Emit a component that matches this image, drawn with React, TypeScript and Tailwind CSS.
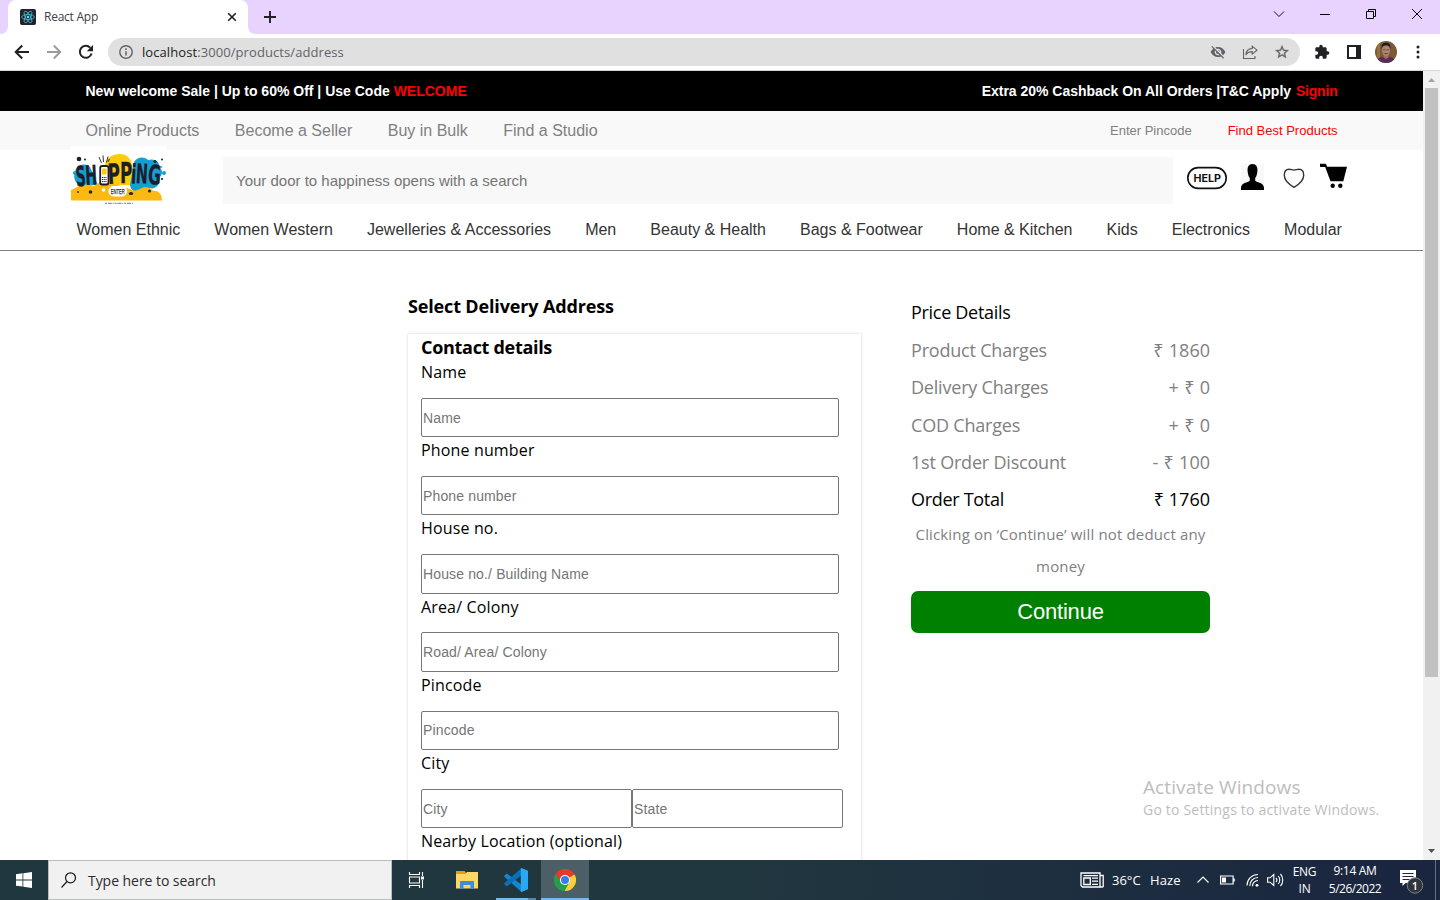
import React from "react";

const ui = "font-['Open_Sans','Noto_Sans',sans-serif]";
const arial = "font-['Liberation_Sans',Arial,sans-serif]";

function ReactIcon() {
  return (
    <svg className="h-4 w-4" viewBox="0 0 16 16">
      <rect width="16" height="16" rx="2" fill="#20232a" />
      <g fill="none" stroke="#53b9d6" strokeWidth="0.8">
        <ellipse cx="8" cy="8" rx="6.4" ry="2.5" />
        <ellipse cx="8" cy="8" rx="6.4" ry="2.5" transform="rotate(60 8 8)" />
        <ellipse cx="8" cy="8" rx="6.4" ry="2.5" transform="rotate(120 8 8)" />
      </g>
      <circle cx="8" cy="8" r="1.3" fill="#61dafb" />
    </svg>
  );
}

function TitleBar() {
  return (
    <div className="flex h-[34px] items-stretch bg-[#e8d3ff]">
      <svg className="h-[34px] w-2" viewBox="0 0 8 34"><path d="M8 26v8H0c5 0 8-3 8-8z" fill="#fff" /></svg>
      <div className="flex w-[240px] items-center rounded-t-lg bg-white pl-3 pr-[10px]">
        <ReactIcon />
        <span className="ml-2 flex-1 text-[12px] tracking-[-0.25px] text-[#3c4043]">React App</span>
        <svg className="h-3 w-3" viewBox="0 0 12 12"><path d="M2.2 2.2l7.6 7.6M9.8 2.2L2.2 9.8" stroke="#202124" strokeWidth="1.6" /></svg>
      </div>
      <svg className="h-[34px] w-2" viewBox="0 0 8 34"><path d="M0 26v8h8c-5 0-8-3-8-8z" fill="#fff" /></svg>
      <svg className="ml-2 mt-[11px] h-3 w-3" viewBox="0 0 12 12"><path d="M6 0v12M0 6h12" stroke="#202124" strokeWidth="1.9" /></svg>
      <div className="ml-auto flex pr-[17px] pt-[8px]">
        <svg className="h-3 w-[12px]" viewBox="0 0 12 12"><path d="M1 3.5L6 8.5l5-5" fill="none" stroke="#111" strokeWidth="1" /></svg>
        <svg className="ml-[34px] h-3 w-[12px]" viewBox="0 0 12 12"><path d="M1 6.500h10" stroke="#000" strokeWidth="1" /></svg>
        <svg className="ml-[34px] h-3 w-[12px]" viewBox="0 0 12 12"><path d="M1.500 3.500h7v7h-7zM3.500 3.500v-2h7v7h-2" fill="none" stroke="#000" strokeWidth="1" /></svg>
        <svg className="ml-[34px] h-3 w-[12px]" viewBox="0 0 12 12"><path d="M1 1l10 10M11 1L1 11" stroke="#000" strokeWidth="1" /></svg>
      </div>
    </div>
  );
}

function Toolbar() {
  return (
    <div className="flex h-[37px] items-center border-b border-[#d5d7d8] bg-white pl-[14px]">
      <svg className="h-4 w-4" viewBox="0 0 16 16"><path d="M15 8H2M8.200 1.500L1.700 8l6.500 6.500" fill="none" stroke="#202124" strokeWidth="2" /></svg>
      <svg className="ml-4 h-4 w-4" viewBox="0 0 16 16"><path d="M1 8h13M7.800 1.500L14.300 8l-6.500 6.500" fill="none" stroke="#9a9b9d" strokeWidth="1.900" /></svg>
      <svg className="ml-4 h-4 w-4" viewBox="0 0 16 16">
        <path d="M13.600 9.500A6 6 0 1 1 12.300 3.800" fill="none" stroke="#202124" strokeWidth="2" />
        <path d="M15 1v6.200H8.800z" fill="#202124" />
      </svg>
      <div className="ml-[14px] flex h-7 w-[1192px] items-center rounded-full bg-[#e0e0e1] pl-[11px] pr-[10px]">
        <svg className="h-[14px] w-[14px]" viewBox="0 0 14 14">
          <circle cx="7" cy="7" r="6.200" fill="none" stroke="#5f6368" strokeWidth="1.400" />
          <path d="M7 6.200v4.300M7 3.300v1.600" stroke="#5f6368" strokeWidth="1.500" />
        </svg>
        <span className="ml-[9px] flex-1 pt-[2px] text-[13px] tracking-[0.08px] text-[#5f6368]"><span className="text-[#202124]">localhost</span>:3000/products/address</span>
        <svg className="h-4 w-4" viewBox="0 0 24 24" fill="#5f6368"><path d="M12 7c2.760 0 5 2.240 5 5 0 .65-.13 1.260-.36 1.830l2.920 2.920c1.510-1.260 2.700-2.890 3.430-4.750-1.730-4.390-6-7.500-11-7.500-1.400 0-2.740.25-3.980.7l2.160 2.160C10.740 7.130 11.350 7 12 7zM2 4.270l2.280 2.280.46.46C3.080 8.300 1.780 10.020 1 12c1.730 4.390 6 7.500 11 7.500 1.550 0 3.030-.3 4.380-.84l.42.42L19.730 22 21 20.730 3.270 3 2 4.270zM7.530 9.800l1.550 1.550c-.05.21-.08.43-.08.65 0 1.660 1.340 3 3 3 .22 0 .44-.03.65-.08l1.550 1.550c-.67.33-1.410.53-2.200.53-2.760 0-5-2.240-5-5 0-.79.2-1.530.53-2.200zm4.310-.78l3.150 3.150.02-.16c0-1.660-1.340-3-3-3l-.17.01z" /></svg>
        <svg className="ml-4 h-4 w-4" viewBox="0 0 16 16" fill="none" stroke="#5f6368" strokeWidth="1.100"><path d="M1.500 5v9.500H13V12M10.200 2.200L15 6.200l-4.800 4V7.600C7 7.600 5 8.800 3.800 11c.3-4 2.500-6.200 6.400-6.600z" /></svg>
        <svg className="ml-4 h-4 w-4" viewBox="0 0 24 24" fill="#5f6368" stroke="#5f6368" strokeWidth="0.500"><path d="M22 9.240l-7.190-.62L12 2 9.190 8.630 2 9.240l5.460 4.730L5.820 21 12 17.270 18.180 21l-1.630-7.030L22 9.240zM12 15.400l-3.760 2.270 1-4.280-3.320-2.880 4.380-.38L12 6.100l1.710 4.040 4.380.38-3.320 2.880 1 4.280L12 15.400z" /></svg>
      </div>
      <svg className="ml-[14px] h-4 w-4" viewBox="0 0 24 24" fill="#202124"><path d="M20.500 11H19V7c0-1.100-.9-2-2-2h-4V3.500C13 2.120 11.880 1 10.500 1S8 2.120 8 3.500V5H4c-1.100 0-1.990.9-1.990 2v3.800H3.500c1.490 0 2.700 1.210 2.700 2.700s-1.210 2.700-2.700 2.700H2V20c0 1.100.9 2 2 2h3.800v-1.500c0-1.490 1.210-2.700 2.700-2.700 1.490 0 2.700 1.210 2.700 2.700V22H17c1.100 0 2-.9 2-2v-4h1.500c1.380 0 2.500-1.120 2.500-2.500S21.880 11 20.500 11z" /></svg>
      <svg className="ml-[17px] h-[14px] w-[14px]" viewBox="0 0 14 14"><path d="M0 0h14v14H0zM2 2v10h7V2z" fill="#202124" fillRule="evenodd" /></svg>
      <svg className="ml-[14px] h-[22px] w-[22px]" viewBox="0 0 22 22">
        <defs><clipPath id="avatar"><circle cx="11" cy="11" r="11" /></clipPath></defs>
        <g clipPath="url(#avatar)">
          <rect width="22" height="22" fill="#7b5a36" />
          <rect x="2" width="3" height="22" fill="#94713f" />
          <path d="M1 22c1-5 4-6.500 10-6.500S20 17 21 22z" fill="#5b2c59" />
          <path d="M8.500 12h5v4.500L11 18l-2.500-1.500z" fill="#a07058" />
          <ellipse cx="11" cy="9.300" rx="4" ry="5.600" fill="#b08270" />
          <path d="M6.600 8.500C5.800 3.500 8 1.800 11 1.800s5.200 1.700 4.400 6.700c-.5-3-1.300-4-4.400-4s-3.900 1-4.400 4z" fill="#211a1c" />
          <path d="M8.300 8.800h2M11.700 8.800h2M9.300 12.500h3.400" stroke="#50342c" strokeWidth="0.800" />
        </g>
      </svg>
      <svg className="ml-[19px] h-4 w-[4px]" viewBox="0 0 4 16" fill="#202124"><circle cx="2" cy="3" r="1.500" /><circle cx="2" cy="8" r="1.500" /><circle cx="2" cy="13" r="1.500" /></svg>
    </div>
  );
}

function Logo() {
  return (
    <svg className="h-[58px] w-[95px]" viewBox="0 0 95 58">
      <rect width="95" height="58" fill="#fff" />
      <path d="M34 22c-1-10 8-14 15-14 6 0 9 3 11 7l6 24H34z" fill="#fecb0d" />
      <path d="M63 16c5-7 12-4 14-2 6-2 12 1 11 7 4 3 4 7 1 10 1 7-5 13-10 11-5 8-19 6-20-3z" fill="#159fd3" />
      <path d="M5 23c4-6 11-5 14-2l8 18-17 0c-6 0-9-9-5-16z" fill="#159fd3" />
      <circle cx="4" cy="27" r="2" fill="#159fd3" />
      <circle cx="93" cy="27" r="2" fill="#159fd3" />
      <circle cx="90" cy="21" r="1" fill="#159fd3" />
      <path d="M0 54.500V44c5-2 8-5 13-5 5-1 7 0 10 1 5-4 10-6 17-3l19 6c4 3 7 1 10 0 4-3 11-2 13 2 5-1 9 3 9 9.500z" fill="#fdb912" />
      <circle cx="8" cy="13" r="2.300" fill="#20202b" /><circle cx="14" cy="13.500" r="1" fill="#20202b" />
      <circle cx="19.500" cy="46" r="1.800" fill="#20202b" /><circle cx="7" cy="46" r="0.900" fill="#20202b" />
      <ellipse cx="60" cy="47.500" rx="2.200" ry="1.500" fill="#20202b" /><circle cx="78.500" cy="45" r="1.500" fill="#20202b" />
      <circle cx="32.500" cy="44" r="1.800" fill="#fff" />
      <circle cx="84" cy="15.500" r="1.600" fill="#20202b" /><circle cx="91" cy="13.500" r="1" fill="#20202b" />
      <circle cx="91" cy="33" r="1.100" fill="#20202b" />
      <g fill="#1d1e2b" stroke="#1d1e2b" strokeWidth="0.300" strokeLinejoin="round" fontFamily="'DejaVu Sans',sans-serif" fontWeight="700">
        <text transform="translate(5.500 40.500) rotate(-4) scale(.49 1)" fontSize="28">S</text>
        <text transform="translate(14.800 39) rotate(-3) scale(.52 1)" fontSize="27">H</text>
        <text transform="translate(37.300 38) rotate(-3) scale(.6 1)" fontSize="28">P</text>
        <text transform="translate(49 36.500) scale(.6 1)" fontSize="28">P</text>
        <text transform="translate(59.800 37.500) rotate(3) scale(.56 1)" fontSize="27">i</text>
        <text transform="translate(64.500 37) rotate(3) scale(.53 1)" fontSize="27">N</text>
        <text transform="translate(76.500 38) rotate(4) scale(.58 1)" fontSize="27">G</text>
      </g>
      <rect x="29.200" y="20" width="8.300" height="18.500" rx="2" fill="#fff" stroke="#1d1e2b" strokeWidth="1.800" />
      <rect x="31" y="22.500" width="4.600" height="6" fill="#fecb0d" />
      <path d="M31 31.500h4.600M31 33.500h4.600M31 35.500h4.600" stroke="#1d1e2b" strokeWidth="1.100" strokeDasharray="1.100 .6" />
      <path d="M28 11l2.500 6M32 9.500l.5 6.500M37 10.500l-1.500 6M38.500 13l-1.500 3" stroke="#1d1e2b" strokeWidth="0.900" />
      <rect x="37.500" y="40" width="18.500" height="10.500" rx="5" fill="#fff" />
      <text x="39.700" y="48.300" fontSize="8" textLength="14" lengthAdjust="spacingAndGlyphs" fontFamily="'Liberation Sans',sans-serif" fill="#1d1e2b" stroke="#1d1e2b" strokeWidth="0.250">ENTER</text>
      <path d="M34 57.300h28" stroke="#777" strokeWidth="1" strokeDasharray="2 .8 4 .8 1 1" />
    </svg>
  );
}

function SiteHeader() {
  const cats = ["Women Ethnic", "Women Western", "Jewelleries & Accessories", "Men", "Beauty & Health", "Bags & Footwear", "Home & Kitchen", "Kids", "Electronics", "Modular"];
  return (
    <header className={`${arial} shrink-0`}>
      <div className="flex h-[40px] items-center justify-between bg-black pl-[85.500px] pr-[85.500px] text-[14px] font-bold text-white">
        <span>New welcome Sale | Up to 60% Off | Use Code <span className="text-[#f00]">WELCOME</span></span>
        <span className="tracking-[-0.02px]">Extra 20% Cashback On All Orders |T&amp;C Apply <span className="ml-px tracking-[-0.200px] text-[#f00]">Signin</span></span>
      </div>
      <div className="flex h-[39px] items-center bg-[#f9f9f9] pl-[85.500px] pr-[85.500px] text-[16px] text-[#808080]">
        <nav className="flex flex-1 gap-[35.500px]">
          <span>Online Products</span><span>Become a Seller</span><span>Buy in Bulk</span><span>Find a Studio</span>
        </nav>
        <span className="text-[13px]">Enter Pincode</span>
        <span className="ml-9 text-[13px] text-[#f00]">Find Best Products</span>
      </div>
      <div className="flex h-[58px] items-start pl-[71px]">
        <div className="-mt-1"><Logo /></div>
        <div className="ml-[57px] mt-[7px] flex h-[47px] w-[950px] items-center bg-[#f8f8f8] pl-[13px] pt-[2px] text-[15px] text-[#757575]">Your door to happiness opens with a search</div>
        <svg className="ml-[14px] mt-[16px] h-[24px] w-[40px]" viewBox="0 0 40 24">
          <rect x="0.800" y="1.600" width="38.400" height="20.800" rx="10.400" fill="none" stroke="#111" strokeWidth="1.600" />
          <text x="6.500" y="16" textLength="27.500" lengthAdjust="spacingAndGlyphs" fontSize="10.500" fontWeight="700" fontFamily="Inter,'Liberation Sans',sans-serif" fill="#111">HELP</text>
        </svg>
        <svg className="ml-[14px] mt-[14px] h-[26px] w-[23px]" viewBox="0 0 23 26">
          <rect width="23" height="26" fill="#f8f8f8" />
          <path d="M11.500 0C7.700 0 6.300 3 6.600 7c.3 3 .8 5.500 2.200 7v2.800C6.500 18.800.3 18.300 0 24v2h23v-2c-.3-5.700-6.500-5.200-8.800-7.200V14c1.400-1.500 1.900-4 2.200-7 .3-4-1.100-7-4.900-7z" fill="#000" />
        </svg>
        <svg className="ml-[19px] mt-[17px] h-[22px] w-[22px]" viewBox="0 0 22 22"><path d="M11 20.300C5.500 17 1.300 13 1.300 8.200 1.300 4.300 3.200 2.200 6 2.200c1.500 0 3.500.9 5 .9s3.500-.9 5-.9c2.800 0 4.700 2.100 4.700 6 0 4.800-4.200 8.800-9.700 12.100z" fill="none" stroke="#333" strokeWidth="1.400" /></svg>
        <svg className="ml-[15px] mt-[13px] h-[26px] w-[27px]" viewBox="0 0 27 26">
          <path d="M0 .7h4.500c1.300 0 1.800.6 2.200 1.800L7 3.700h20l-3.300 13H23.500v1.500H10.500L5.200 4H1C0 4 0 3.500 0 3z" fill="#000" />
          <circle cx="12.700" cy="22.700" r="2.200" /><circle cx="20.300" cy="22.700" r="2.200" />
        </svg>
      </div>
      <nav className="flex h-[43px] items-center justify-between border-b border-[#808080] pl-[76.500px] pr-[81px] pt-[2px] text-[16px] text-[#333]">
        {cats.map((c) => <span key={c}>{c}</span>)}
      </nav>
    </header>
  );
}

const inputCls = `${arial} block h-[39.400px] rounded-[2px] border border-[#767676] bg-white px-px pt-[0.200px] text-[14px] tracking-[0.14px] outline-none placeholder:text-[#757575]`;
const labelCls = "mb-[14.200px] block h-[24.600px] text-[16px] leading-[27px] tracking-[0.15px]";

function Field({ label, placeholder }: { label: string; placeholder: string }) {
  return (
    <div className="h-[78.200px]">
      <label className={labelCls}>{label}</label>
      <input className={`${inputCls} w-[418px]`} placeholder={placeholder} />
    </div>
  );
}

function AddressForm() {
  return (
    <section className="w-[453px]">
      <h2 className="h-[37px] text-[18px] leading-[22px] font-bold tracking-[-0.15px]">Select Delivery Address</h2>
      <div className="mt-[2px] h-[620px] pl-[13px] shadow-[0_0_3px_rgba(0,0,0,0.18)]">
        <h3 className="h-[25px] text-[18px] leading-[26px] font-bold tracking-[-0.3px]">Contact details</h3>
        <Field label="Name" placeholder="Name" />
        <Field label="Phone number" placeholder="Phone number" />
        <Field label="House no." placeholder="House no./ Building Name" />
        <Field label="Area/ Colony" placeholder="Road/ Area/ Colony" />
        <Field label="Pincode" placeholder="Pincode" />
        <div className="h-[78.200px]">
          <label className={labelCls}>City</label>
          <div className="flex">
            <input className={`${inputCls} w-[211px]`} placeholder="City" />
            <input className={`${inputCls} w-[211px]`} placeholder="State" />
          </div>
        </div>
        <Field label="Nearby Location (optional)" placeholder="Nearby Location" />
      </div>
    </section>
  );
}

function PriceRow({ label, value, dark }: { label: string; value?: string; dark?: boolean }) {
  return (
    <div className={`flex h-[37.400px] items-center justify-between ${dark ? "text-black" : "text-[#808080]"}`}>
      <span className={dark ? "tracking-[-0.3px]" : "tracking-[-0.2px]"}>{label}</span>
      <span className={dark ? "" : "[word-spacing:0.6px]"}>{value}</span>
    </div>
  );
}

function PriceDetails() {
  return (
    <section className="ml-[50px] w-[299px] text-[18px]">
      <PriceRow label="Price Details" dark />
      <PriceRow label="Product Charges" value="₹ 1860" />
      <PriceRow label="Delivery Charges" value="+ ₹ 0" />
      <PriceRow label="COD Charges" value="+ ₹ 0" />
      <PriceRow label="1st Order Discount" value="- ₹ 100" />
      <PriceRow label="Order Total" value="₹ 1760" dark />
      <p className="-mt-[0.300px] h-[73.100px] text-center text-[15px] leading-[32px] tracking-[0.15px] text-[#808080]">Clicking on ‘Continue’ will not deduct any<br />money</p>
      <button className={`${arial} block h-[42px] w-full rounded-[7px] bg-[#008000] pb-[2px] text-[22px] tracking-[-0.2px] text-white`}>Continue</button>
    </section>
  );
}

function Scrollbar() {
  return (
    <div className="flex w-[17px] flex-col items-center bg-[#f1f1f1]">
      <svg className="h-[17px] w-[17px]" viewBox="0 0 17 17"><path d="M5 11l3.500-4 3.500 4z" fill="#a3a3a3" /></svg>
      <div className="h-[589px] w-[13px] bg-[#c1c1c1]" />
      <svg className="mt-auto h-[17px] w-[17px]" viewBox="0 0 17 17"><path d="M5 6l3.500 4L12 6z" fill="#505050" /></svg>
    </div>
  );
}

function Taskbar() {
  return (
    <div className="flex h-[40px] items-stretch bg-linear-to-r from-[#21373f] via-[#21373f] via-50% to-[#1a2540] text-white">
      <div className="flex w-12 items-center justify-center">
        <svg className="h-4 w-4" viewBox="0 0 16 16" fill="#fff"><path d="M0 2.200l6.500-.9v6.200H0zM7.300 1.200L16 0v7.500H7.300zM0 8.400h6.500v6.200L0 13.700zM7.300 8.400H16V16l-8.700-1.200z" /></svg>
      </div>
      <div className="flex w-[344px] items-center border border-[#b9bcbd] bg-[#f1f1f1] pl-3">
        <svg className="h-4 w-4" viewBox="0 0 16 16" fill="none" stroke="#1b1b1b" strokeWidth="1.200"><circle cx="9.500" cy="5.800" r="5" /><path d="M6 9.500L.5 15.500" /></svg>
        <span className="ml-[11px] text-[14px] tracking-[-0.05px] text-[#2b2b2b]">Type here to search</span>
      </div>
      <div className="flex w-[48px] items-center justify-center">
        <svg className="h-4 w-[17px]" viewBox="0 0 17 16" fill="none" stroke="#fff" strokeWidth="1.100"><path d="M1.500 0v2.500h10V0M1.500 16v-2.500h10V16M1.500 5h10v6h-10zM14.500 0v4M14.500 8v8" /><path d="M13 4.500h3v3h-3z" fill="#fff" stroke="none" /></svg>
      </div>
      <div className="flex w-[52px] items-center justify-center pl-px">
        <svg className="h-[18px] w-[22px]" viewBox="0 0 22 18"><path d="M0 0h8.500L10 1.500v2H0z" fill="#e09e16" /><path d="M0 3h9.500L11 1h11v16.500H0z" fill="#ffd767" /><path d="M4 18v-8h14v8h-3.500v-4h-7v4z" fill="#3a8fd6" /></svg>
      </div>
      <div className="flex w-[48px] flex-col items-center">
        <svg className="mt-[8px] h-[24px] w-[24px]" viewBox="0 0 24 24">
          <path d="M17.500 24L.6 8.900c-.5-.5-.5-1.100 0-1.500l1.500-1.300c.4-.3.9-.4 1.400 0L18 17z" fill="#1486cf" />
          <path d="M17.500 0L.6 15.100c-.5.500-.5 1.100 0 1.500l1.500 1.300c.4.300.9.400 1.400 0L18 7z" fill="#0b70b8" />
          <path d="M17.500 0L24 2.800v18.400L17.500 24c-.5.100-.7-.3-.7-.7V.8c0-.5.200-.9.700-.8z" fill="#29a8f3" />
        </svg>
        <div className="mt-auto flex h-[2px] w-[40px]"><div className="w-[32px] bg-[#76b9ed]" /><div className="w-[8px] bg-[#5488b3]" /></div>
      </div>
      <div className="ml-px flex w-[48px] flex-col items-center border-b-2 border-[#76b9ed] bg-[#4d5f66]">
        <svg className="mt-[9px] h-[22px] w-[22px]" viewBox="0 0 22 22">
          <path d="M11 11L1.470 5.500A11 11 0 0 1 20.530 5.500z" fill="#e33b2e" />
          <path d="M11 11V22A11 11 0 0 1 1.470 5.500z" fill="#22a04b" />
          <path d="M11 11L20.530 5.500A11 11 0 0 1 11 22z" fill="#fdcf37" />
          <path d="M11 6h9.800A11 11 0 0 0 1.470 5.500L6.600 13.500z" fill="#e33b2e" />
          <path d="M6.700 13.500L11 16l4.300-2.500L10.500 22A11 11 0 0 1 1.470 5.500z" fill="#22a04b" />
          <circle cx="11" cy="11" r="5.100" fill="#fff" /><circle cx="11" cy="11" r="4" fill="#3b7de8" />
        </svg>
      </div>
      <div className="ml-auto flex items-center">
        <svg className="h-4 w-6" viewBox="0 0 24 16" fill="none" stroke="#fff" strokeWidth="1.300"><path d="M1 1h19v14H2.500L1 13.500zM20 3.500h3.200v11L22 15h-2M3.800 6h6.500v6.500H3.800zM12 6.200h6M12 9.200h6M12 12.300h6M3.500 3.700h14.500" /></svg>
        <span className="ml-2 w-[38px] pt-[2px] text-[13px]">36°C</span>
        <span className="w-[41px] pt-[2px] text-[13px] tracking-[0.1px]">Haze</span>
        <svg className="ml-[6px] h-3 w-3" viewBox="0 0 12 12" fill="none" stroke="#fff" strokeWidth="1.200"><path d="M.5 8.500L6 3l5.500 5.500" /></svg>
        <svg className="ml-[11px] h-3 w-[15px]" viewBox="0 0 15 12"><path d="M.6 2h12.500v8H.6z" fill="none" stroke="#fff" strokeWidth="1.200" /><path d="M2 3.500h4v5H2zM13.300 4.500h1.500v3h-1.500z" fill="#fff" /></svg>
        <svg className="ml-[11px] h-[14px] w-[13px]" viewBox="0 0 13 14" fill="none" stroke="#fff" strokeWidth="1.100"><path d="M1 12.500A11 11 0 0 1 12 1.500M3.800 13A8.200 8.200 0 0 1 12 4.500M6.500 13.200A5.500 5.500 0 0 1 12 7.500" /><circle cx="11" cy="12.300" r="1.400" fill="#fff" stroke="none" /></svg>
        <svg className="ml-[8px] h-[14px] w-[17px]" viewBox="0 0 17 14" fill="none" stroke="#fff" strokeWidth="1.100"><path d="M.6 4.800h2.500L6.800 1.500v11L3.100 9.200H.6zM9 4.800c1 1.200 1 3.200 0 4.400M11.300 3c2 2.200 2 5.800 0 8M13.500 1c3 3.200 3 8.800 0 12" /></svg>
        <div className="ml-[6px] w-[29px] text-center text-[12px] leading-[17px] tracking-[-0.3px]">ENG<br />IN</div>
        <div className="ml-[5px] w-[62px] text-center text-[12px] leading-[18px] tracking-[-0.5px]"><div className="tracking-[-0.3px]">9:14 AM</div><div>5/26/2022</div></div>
        <svg className="ml-[10px] mt-[4px] h-6 w-7" viewBox="0 0 28 24">
          <path d="M4 0h16v13H9.500L6.500 16v-3H4z" fill="#fff" /><path d="M6.500 3.500h11M6.500 6.500h11M6.500 9.500h7" stroke="#1d2942" strokeWidth="1" />
          <circle cx="19" cy="15.500" r="7.700" fill="#30343b" stroke="#7b818b" strokeWidth="1" />
          <text x="19" y="19.500" textAnchor="middle" fontSize="11" fill="#fff" fontFamily="'Open Sans',sans-serif" fontWeight="600">1</text>
        </svg>
        <div className="ml-[11px] mr-[4px] h-10 w-px bg-[#67707f]" />
      </div>
    </div>
  );
}

export default function App() {
  return (
    <div className={`${ui} flex h-[900px] w-[1440px] flex-col overflow-hidden bg-white`}>
      <TitleBar />
      <Toolbar />
      <div className="relative flex min-h-0 flex-1">
        <div className="flex flex-1 flex-col overflow-hidden">
          <SiteHeader />
          <main className="flex min-h-0 flex-1 overflow-hidden pl-[408px] text-black">
            <div className="pt-[44px]"><AddressForm /></div>
            <div className="pt-[43.200px]"><PriceDetails /></div>
          </main>
        </div>
        <Scrollbar />
        <div className="absolute left-[1143px] top-[703px] text-[#bdbdbd]">
          <div className="text-[19px] leading-[26px] tracking-[0.1px]">Activate Windows</div>
          <div className="text-[14px] leading-[20px] tracking-[0.2px]">Go to Settings to activate Windows.</div>
        </div>
      </div>
      <Taskbar />
    </div>
  );
}
